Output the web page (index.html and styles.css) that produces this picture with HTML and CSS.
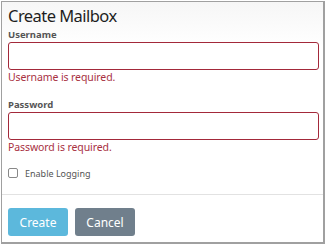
FILE: index.html
```html
<!DOCTYPE html>
<html>
<head>
<meta charset="utf-8">
<link rel="stylesheet" href="styles.css">
</head>
<body>
<div class="dialog">
  <div class="header">
    <h1 class="title">Create Mailbox</h1>
  </div>
  <form class="form">
    <div class="field">
      <label class="label">Username</label>
      <input class="input" type="text">
      <div class="error">Username is required.</div>
    </div>
    <div class="field field-2">
      <label class="label">Password</label>
      <input class="input" type="password">
      <div class="error">Password is required.</div>
    </div>
    <label class="check"><span class="box"></span><span>Enable Logging</span></label>
  </form>
  <div class="footer">
    <button class="btn btn-create" type="button">Create</button>
    <button class="btn btn-cancel" type="button">Cancel</button>
  </div>
</div>
</body>
</html>
```
FILE: styles.css
```css
html, body { margin: 0; padding: 0; background: #fff; }
body { font-family: "Noto Sans", "Open Sans", sans-serif; color: #222; }
.dialog {
  margin: 1px 0 0 1px;
  width: 324px; height: 243px; box-sizing: border-box;
  border: 1px solid #a0a0a0; border-right-width: 2px; border-bottom-width: 2px;
  background: linear-gradient(#f6f6f6, #fff 45px);
}
.header { padding: 4px 4px 0 6px; }
.title { margin: 0; font-size: 16.5px; font-weight: 400; line-height: 20px; letter-spacing: -0.55px; color: #1e1e1e; }
.form { padding: 2px 4px 0 6px; }
.field { display: flex; flex-direction: column; }
.field-2 { margin-top: 14px; }
.label { font-size: 9.5px; font-weight: 700; color: #555; line-height: 13px; }
.input {
  height: 28px; box-sizing: border-box; margin: 1px 0 0; border: 1px solid #a3293a;
  border-radius: 3px; width: 100%; outline: none; background: #fff;
}
.error { color: #a8313f; font-size: 10.5px; line-height: 14px; letter-spacing: -0.1px; }
.check { display: flex; align-items: center; gap: 7px; font-size: 9px; color: #555; margin-top: 12px; height: 14px; }
.box { width: 8px; height: 8px; border: 1px solid #888; border-radius: 2px; }
.footer { border-top: 1px solid #e2e2e2; margin-top: 14px; padding: 13px 6px; display: flex; gap: 7px; }
.btn {
  width: 60px; height: 28px; border: none; border-radius: 3px; color: #fff;
  font-family: inherit; font-size: 12px; padding: 0;
}
.btn-create { background: #5cb8dc; }
.btn-cancel { background: #707f8c; }
```
